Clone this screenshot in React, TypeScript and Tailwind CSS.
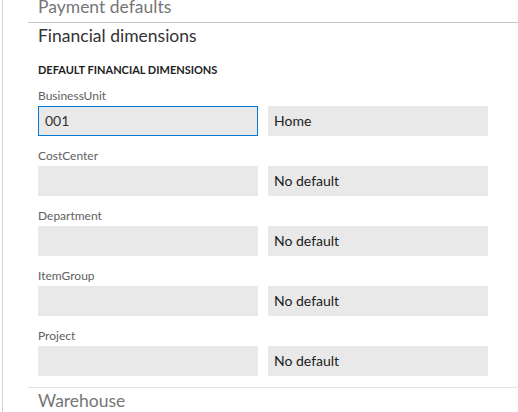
const rows = [
  { label: "BusinessUnit", value: "001", desc: "Home", focused: true },
  { label: "CostCenter", value: "", desc: "No default" },
  { label: "Department", value: "", desc: "No default" },
  { label: "ItemGroup", value: "", desc: "No default" },
  { label: "Project", value: "", desc: "No default" },
];

function DimensionRow({ label, value, desc, focused }: { label: string; value: string; desc: string; focused?: boolean }) {
  return (
    <div className="flex flex-col">
      <div className="h-[18px] text-[12px] leading-[16px] text-[#606060]">{label}</div>
      <div className="flex gap-[10px]">
        <div
          className={`h-[30px] w-[220px] bg-[#e9e9e9] px-[6px] text-[14px] leading-[28px] text-[#333] ${
            focused ? "border border-[#0078d7]" : "border border-[#e9e9e9]"
          }`}
        >
          {value}
        </div>
        <div className="h-[30px] w-[220px] bg-[#e9e9e9] px-[6px] text-[14px] leading-[30px] text-[#212121]">{desc}</div>
      </div>
    </div>
  );
}

export default function App() {
  return (
    <div
      className="ml-[2px] h-[412px] overflow-hidden border-l border-[#d4d4d4] bg-white pl-[25px]"
      style={{ fontFamily: 'Lato, "Open Sans", sans-serif' }}
    >
      <div className="-mt-[6px] h-[29px] border-b border-[#c6c6c6] px-[10px] text-[17.5px] leading-[26px] text-[#767676]">
        Payment defaults
      </div>
      <div className="px-[10px]">
        <h2 className="text-[17.5px] leading-[26px] text-[#333]">Financial dimensions</h2>
        <h3 className="mt-[14px] text-[11px] font-bold leading-[14px] text-[#222]">DEFAULT FINANCIAL DIMENSIONS</h3>
        <div className="mt-[11px] flex flex-col gap-[12px]">
          {rows.map((r) => (
            <DimensionRow key={r.label} {...r} />
          ))}
        </div>
      </div>
      <div className="mt-[11px] border-t border-[#e3e3e3] px-[10px] text-[17.5px] leading-[26px] text-[#767676]">
        Warehouse
      </div>
    </div>
  );
}
